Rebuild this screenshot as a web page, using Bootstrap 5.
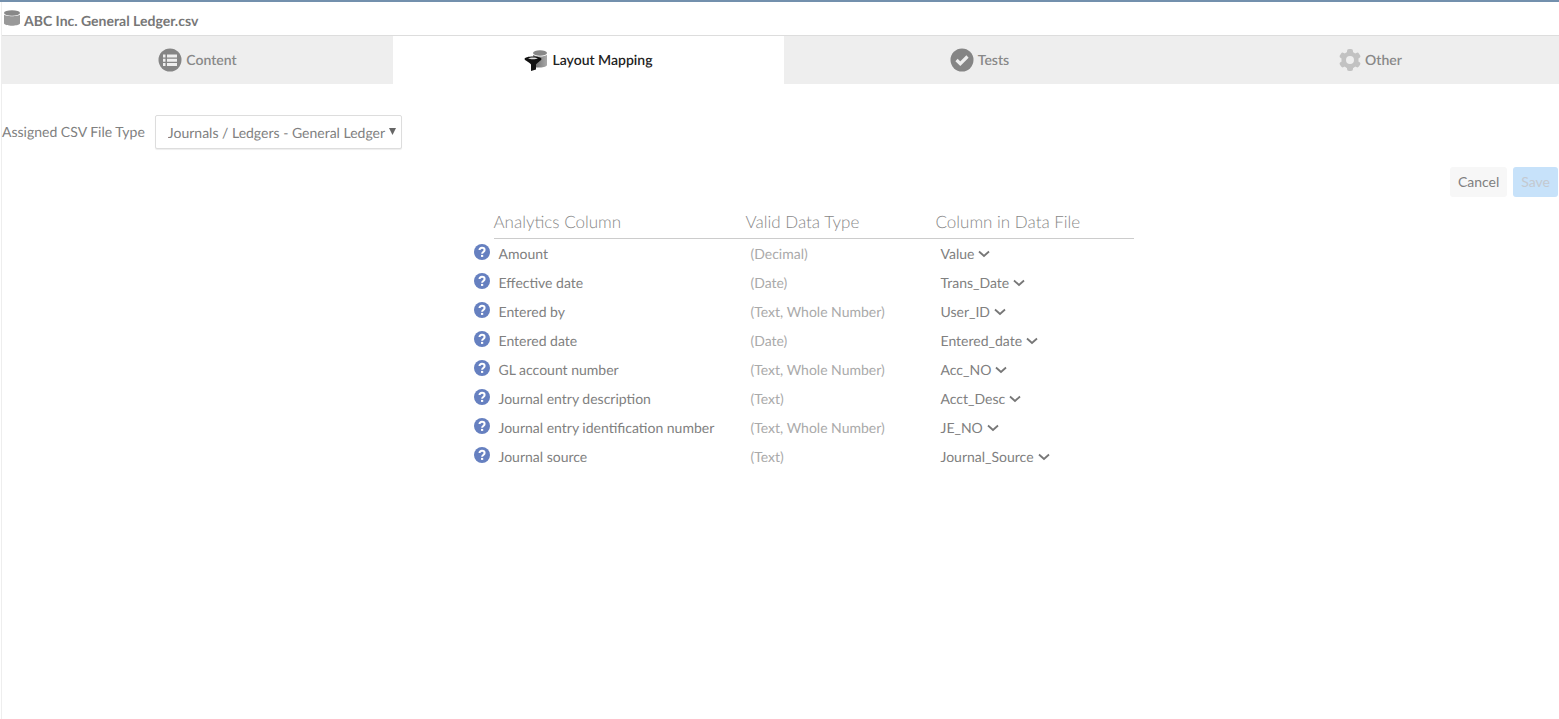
<!DOCTYPE html>
<html lang="en">
<head>
<meta charset="utf-8">
<meta name="viewport" content="width=device-width, initial-scale=1">
<title>ABC Inc. General Ledger.csv</title>
<link href="https://cdn.jsdelivr.net/npm/bootstrap@5.3.0/dist/css/bootstrap.min.css" rel="stylesheet">
<style>
body{font-family:Lato,"Liberation Sans",sans-serif;font-size:14px;line-height:20px;color:#808080;background:#fff;text-rendering:geometricPrecision}
.app-shell{border-top:2px solid #7390ad;padding-left:1px}
.app-body{border-left:1px solid #eee;min-height:calc(100vh - 2px)}
.file-head{height:34px;border-bottom:1px solid #ddd;padding:0 2px;gap:4px}
.file-head h1{font-size:14px;line-height:20px;font-weight:700;color:#777;padding-top:4px}
.file-head svg{margin-top:-2px}
.tab-strip{margin-right:-7px}
.tab-strip .nav-link{height:48px;padding:0;gap:4px;border-radius:0;background:#eee;color:#888;font-weight:600}
.tab-strip .nav-link.active{background:#fff;color:#222}
.type-row{padding-top:31px;gap:10px}
.type-row .form-select{width:247px;height:34px;padding:1px 0 0 12px;font-size:14px;line-height:20px;color:#808080;border:1px solid #ddd;border-radius:2px;background-image:none;box-shadow:0 1px 1px #eee;text-rendering:inherit}
.select-arrow{right:6px;top:13px;pointer-events:none}
.action-row{padding:18px 1px 0 0;gap:6px}
.action-row .btn{height:30px;padding:0 8px;font-size:14px;line-height:20px;border:0;border-radius:3px;background:#f7f7f7;color:#808080}
.action-row .btn-save{background:#c7e2fa;color:#c4c9d0;opacity:1}
.map-area{padding:9px 0 0 46px}
.map-grid{width:660px;table-layout:fixed;border-collapse:collapse}
.map-grid th{height:32px;padding:0 0 0 0;font-size:17px;line-height:24px;font-weight:300;color:#888;border-bottom:1px solid #ccc;vertical-align:middle}
.map-grid th:first-child{border-bottom:0}
.map-grid td{height:29px;padding:2px 0 0 5px;vertical-align:middle}
.map-grid td:first-child{padding:0 0 2px}
.map-grid .type-cell{color:#aaa}
.map-grid .btn{font-size:14px;line-height:20px;color:#808080;border:0;gap:4px;text-rendering:inherit}
.col-help{width:20px}.col-name{width:252px}.col-type{width:190px}
</style>
</head>
<body>
<svg class="d-none" aria-hidden="true">
<symbol id="help" viewBox="0 0 16 16"><circle cx="8" cy="8" r="8" fill="#6680c0"/><path d="M5.500 6.100C5.500 4.600 6.500 3.800 8 3.800s2.600.9 2.600 2.200c0 1.900-2.500 2-2.500 3.700" fill="none" stroke="#fff" stroke-width="2"/><path d="M7 10.900h2.200v2H7z" fill="#fff"/></symbol>
<symbol id="chev" viewBox="0 0 12 12"><path d="M1 3.500 6 8l5-4.500" fill="none" stroke="#777" stroke-width="1.800"/></symbol>
</svg>
<div class="app-shell overflow-hidden">
<div class="app-body">
<header class="file-head d-flex align-items-center">
<svg width="16" height="16" viewBox="0 0 16 16" aria-hidden="true"><ellipse cx="8" cy="3" rx="8" ry="2.700" fill="#888"/><path d="M0 4.500c1.500 2.300 14.500 2.300 16 0v9c-1.500 2.900-14.500 2.900-16 0z" fill="#999"/></svg>
<h1 class="m-0">ABC Inc. General Ledger.csv</h1>
</header>
<nav class="tab-strip nav nav-fill row g-0 row-cols-4" aria-label="File sections">
<a href="#" class="nav-link col d-flex align-items-center justify-content-center">
<svg width="24" height="24" viewBox="0 0 24 24" aria-hidden="true"><circle cx="12" cy="12" r="11.500" fill="#858585"/><path d="M5 6.500h2.500v3H5zm4 0h10v3H9zM5 10.700h2.500v3H5zm4 0h10v3H9zM5 15h2.500v3H5zm4 0h10v3H9z" fill="#eee"/></svg>
<span>Content</span></a>
<a href="#" class="nav-link active col d-flex align-items-center justify-content-center" aria-current="page">
<svg width="24" height="24" viewBox="0 0 24 24" aria-hidden="true"><defs><linearGradient id="drum"><stop stop-color="#666"/><stop offset="1" stop-color="#aaa"/></linearGradient></defs><ellipse cx="16" cy="5" rx="7" ry="2.800" fill="#888"/><path d="M9 6.700c2.500 2.400 11.500 2.400 14 0v10.500c-1 2-8 3-12 2z" fill="url(#drum)"/><path d="M.5 11c0-3.500 17-3.500 17 0 0 1.500-4 3.500-5.500 5.500v5L7 23v-6.500C6 14.500.5 12.500.5 11z" fill="#111"/><path d="M4 10.500c2-1.500 8-1.500 10 0-2 1-8 1-10 0z" fill="#ddd"/></svg>
<span>Layout Mapping</span></a>
<a href="#" class="nav-link col d-flex align-items-center justify-content-center">
<svg width="24" height="24" viewBox="0 0 24 24" aria-hidden="true"><circle cx="12" cy="12" r="11.500" fill="#858585"/><path d="m6.500 12 3.800 3.700 7.200-7.200" fill="none" stroke="#eee" stroke-width="3.200"/></svg>
<span>Tests</span></a>
<a href="#" class="nav-link col d-flex align-items-center justify-content-center">
<svg width="22" height="22" viewBox="0 0 22 22" aria-hidden="true"><circle cx="11" cy="11" r="6.300" fill="none" stroke="#c2c2c2" stroke-width="4.600"/><g fill="#c2c2c2"><rect id="tooth" x="8" y="0" width="6" height="5" rx="2"/><use href="#tooth" transform="rotate(60 11 11)"/><use href="#tooth" transform="rotate(120 11 11)"/><use href="#tooth" transform="rotate(180 11 11)"/><use href="#tooth" transform="rotate(240 11 11)"/><use href="#tooth" transform="rotate(300 11 11)"/></g></svg>
<span>Other</span></a>
</nav>
<main>
<div class="type-row d-flex align-items-center">
<label for="fileType">Assigned CSV File Type</label>
<div class="position-relative">
<select id="fileType" class="form-select"><option>Journals / Ledgers - General Ledger</option></select>
<svg class="select-arrow position-absolute" width="7" height="7" viewBox="0 0 7 7" aria-hidden="true"><path d="M0 0h7L3.500 7z" fill="#666"/></svg>
</div>
</div>
<div class="action-row d-flex justify-content-end">
<button type="button" class="btn">Cancel</button>
<button type="button" class="btn btn-save" disabled>Save</button>
</div>
<div class="map-area">
<table class="map-grid mx-auto">
<colgroup><col class="col-help"><col class="col-name"><col class="col-type"><col></colgroup>
<thead><tr><th></th><th scope="col">Analytics Column</th><th scope="col">Valid Data Type</th><th scope="col">Column in Data File</th></tr></thead>
<tbody>
<tr><td><svg class="d-block" width="16" height="16" role="img" aria-label="Help"><use href="#help"/></svg></td><td>Amount</td><td class="type-cell">(Decimal)</td><td><button type="button" class="btn p-0 d-flex align-items-center">Value<svg width="12" height="12"><use href="#chev"/></svg></button></td></tr>
<tr><td><svg class="d-block" width="16" height="16" role="img" aria-label="Help"><use href="#help"/></svg></td><td>Effective date</td><td class="type-cell">(Date)</td><td><button type="button" class="btn p-0 d-flex align-items-center">Trans_Date<svg width="12" height="12"><use href="#chev"/></svg></button></td></tr>
<tr><td><svg class="d-block" width="16" height="16" role="img" aria-label="Help"><use href="#help"/></svg></td><td>Entered by</td><td class="type-cell">(Text, Whole Number)</td><td><button type="button" class="btn p-0 d-flex align-items-center">User_ID<svg width="12" height="12"><use href="#chev"/></svg></button></td></tr>
<tr><td><svg class="d-block" width="16" height="16" role="img" aria-label="Help"><use href="#help"/></svg></td><td>Entered date</td><td class="type-cell">(Date)</td><td><button type="button" class="btn p-0 d-flex align-items-center">Entered_date<svg width="12" height="12"><use href="#chev"/></svg></button></td></tr>
<tr><td><svg class="d-block" width="16" height="16" role="img" aria-label="Help"><use href="#help"/></svg></td><td>GL account number</td><td class="type-cell">(Text, Whole Number)</td><td><button type="button" class="btn p-0 d-flex align-items-center">Acc_NO<svg width="12" height="12"><use href="#chev"/></svg></button></td></tr>
<tr><td><svg class="d-block" width="16" height="16" role="img" aria-label="Help"><use href="#help"/></svg></td><td>Journal entry description</td><td class="type-cell">(Text)</td><td><button type="button" class="btn p-0 d-flex align-items-center">Acct_Desc<svg width="12" height="12"><use href="#chev"/></svg></button></td></tr>
<tr><td><svg class="d-block" width="16" height="16" role="img" aria-label="Help"><use href="#help"/></svg></td><td>Journal entry identification number</td><td class="type-cell">(Text, Whole Number)</td><td><button type="button" class="btn p-0 d-flex align-items-center">JE_NO<svg width="12" height="12"><use href="#chev"/></svg></button></td></tr>
<tr><td><svg class="d-block" width="16" height="16" role="img" aria-label="Help"><use href="#help"/></svg></td><td>Journal source</td><td class="type-cell">(Text)</td><td><button type="button" class="btn p-0 d-flex align-items-center">Journal_Source<svg width="12" height="12"><use href="#chev"/></svg></button></td></tr>
</tbody>
</table>
</div>
</main>
</div>
</div>
<script src="https://cdn.jsdelivr.net/npm/bootstrap@5.3.0/dist/js/bootstrap.bundle.min.js"></script>
</body>
</html>
